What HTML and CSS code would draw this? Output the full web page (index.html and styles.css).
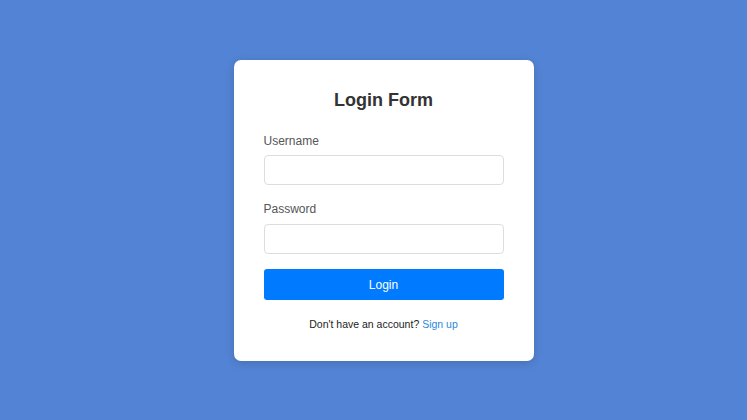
FILE: index.html
```html
<!DOCTYPE html>
<html lang="en">
<head>
<meta charset="utf-8">
<title>Login Form</title>
<link rel="stylesheet" href="styles.css">
</head>
<body>
<main class="page">
  <form class="card">
    <h2 class="title">Login Form</h2>
    <label class="label" for="username">Username</label>
    <input class="field" id="username" type="text">
    <label class="label label-gap" for="password">Password</label>
    <input class="field" id="password" type="password">
    <button class="btn" type="button">Login</button>
    <p class="footer">Don't have an account? <a class="link" href="#">Sign up</a></p>
  </form>
</main>
</body>
</html>
```
FILE: styles.css
```css
* { box-sizing: border-box; }
html, body { margin: 0; height: 100%; }
body {
  background: #5383d4;
  font-family: "Liberation Sans", Arial, sans-serif;
}
.page {
  height: 100%;
  display: flex;
  align-items: center;
  justify-content: center;
  padding: 1px 0 0 20px;
}
.card {
  width: 300px;
  background: #fff;
  border-radius: 7px;
  padding: 30px;
  display: flex;
  flex-direction: column;
  box-shadow: 0 2px 8px rgba(0,0,0,0.15);
}
.title {
  margin: 0 0 23px;
  font-size: 18px;
  line-height: 21px;
  font-weight: bold;
  color: #333;
  text-align: center;
}
.label {
  font-size: 12px;
  line-height: 14px;
  color: #555;
  margin-bottom: 7px;
}
.label-gap { margin-top: 17px; margin-bottom: 8px; }
.field {
  height: 30px;
  border: 1px solid #ddd;
  border-radius: 4px;
  background: #fff;
  font: inherit;
  padding: 0 8px;
}
.btn {
  margin-top: 15px;
  height: 31px;
  border: none;
  border-radius: 3px;
  background: #007bff;
  color: #fff;
  font-family: inherit;
  font-size: 12px;
}
.footer {
  margin: 17px 0 0;
  font-size: 10.5px;
  line-height: 14px;
  color: #222;
  text-align: center;
}
.link {
  color: #2a88e0;
  text-decoration: none;
}
```
